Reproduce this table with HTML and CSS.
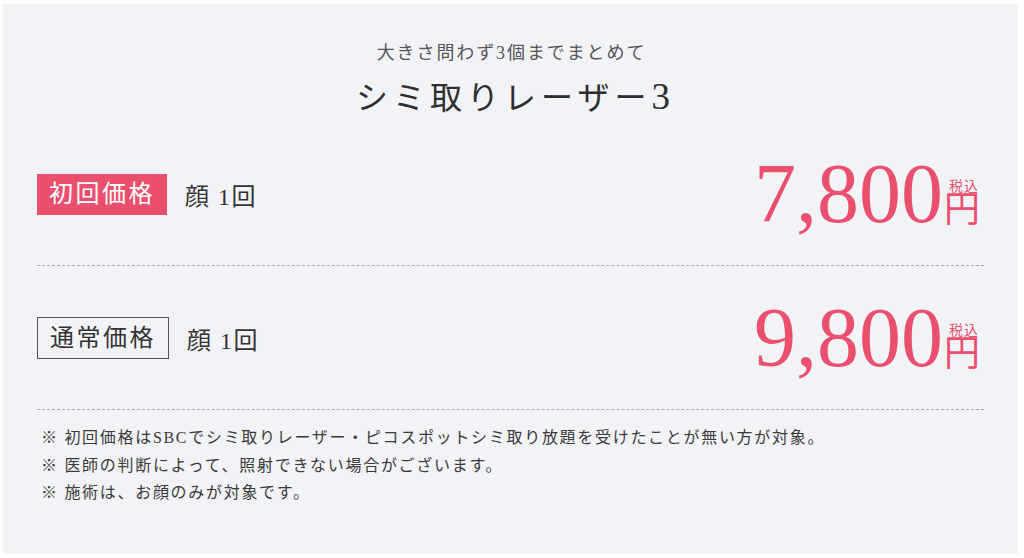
FILE: index.html
```html
<!DOCTYPE html>
<html lang="ja">
<head>
<meta charset="utf-8">
<title>シミ取りレーザー3</title>
<link rel="stylesheet" href="styles.css">
</head>
<body>
<section class="panel">
  <header class="head">
    <p class="sub">大きさ問わず3個までまとめて</p>
    <h1 class="title">シミ取りレーザー<span class="title-num">3</span></h1>
  </header>
  <div class="row">
    <div class="label">
      <span class="badge badge-first">初回価格</span>
      <span class="area">顔 1回</span>
    </div>
    <div class="price">
      <span class="num">7,800</span><span class="yen">円</span>
      <span class="tax">税込</span>
    </div>
  </div>
  <div class="row">
    <div class="label">
      <span class="badge badge-normal">通常価格</span>
      <span class="area">顔 1回</span>
    </div>
    <div class="price">
      <span class="num">9,800</span><span class="yen">円</span>
      <span class="tax">税込</span>
    </div>
  </div>
  <ul class="notes">
    <li>※ 初回価格はSBCでシミ取りレーザー・ピコスポットシミ取り放題を受けたことが無い方が対象。</li>
    <li>※ 医師の判断によって、照射できない場合がございます。</li>
    <li>※ 施術は、お顔のみが対象です。</li>
  </ul>
</section>
</body>
</html>
```
FILE: styles.css
```css
* { box-sizing: border-box; }
html, body { margin: 0; padding: 0; background: #ffffff; }
body {
  font-family: "Liberation Serif", "Noto Sans CJK JP", serif;
  color: #333;
}
.panel {
  margin: 4px 6px 4px 3px;
  height: 550px;
  background: #f2f3f7;
  padding: 0 34px;
}
.head {
  padding-top: 35px;
  text-align: center;
}
.sub {
  margin: 0;
  font-size: 18px;
  line-height: 28px;
  letter-spacing: 1.9px;
  color: #555;
  padding-left: 2px;
}
.title {
  margin: 7px 0 0;
  height: 48px;
  font-size: 32px;
  line-height: 48px;
  font-weight: 400;
  letter-spacing: 5px;
  padding-left: 5px;
  color: #2e2e2e;
}
.title-num {
  font-size: 37px;
  line-height: 1;
  letter-spacing: 0;
}
.row {
  display: flex;
  align-items: center;
  justify-content: space-between;
  padding: 30px 0 29px;
  border-bottom: 1px dashed #a9a9ab;
}
.label {
  display: flex;
  align-items: center;
  gap: 18px;
}
.badge {
  display: inline-flex;
  align-items: center;
  font-size: 24px;
  letter-spacing: 2.5px;
  line-height: 1;
  padding: 0 9px 0 12px;
}
.badge-first {
  height: 41px;
  width: 130px;
  background: #ea4f6e;
  color: #fff;
}
.badge-normal {
  height: 42px;
  width: 132px;
  border: 1px solid #555;
  color: #333;
  padding-left: 12px;
}
.area {
  font-size: 24px;
  letter-spacing: 1.5px;
  color: #333;
}
.price {
  position: relative;
  color: #ea4f6e;
  line-height: 84px;
  height: 84px;
  padding-right: 4px;
  white-space: nowrap;
}
.num {
  font-size: 84px;
}
.yen {
  font-size: 36px;
  margin-left: 1px;
}
.tax {
  position: absolute;
  right: 5px;
  top: 28px;
  font-size: 14px;
  line-height: 14px;
  letter-spacing: 1px;
}
.notes {
  list-style: none;
  margin: 0;
  padding: 14px 0 0 4px;
  font-size: 16px;
  line-height: 27.5px;
  letter-spacing: 1.7px;
  color: #3a3a3a;
}
```
